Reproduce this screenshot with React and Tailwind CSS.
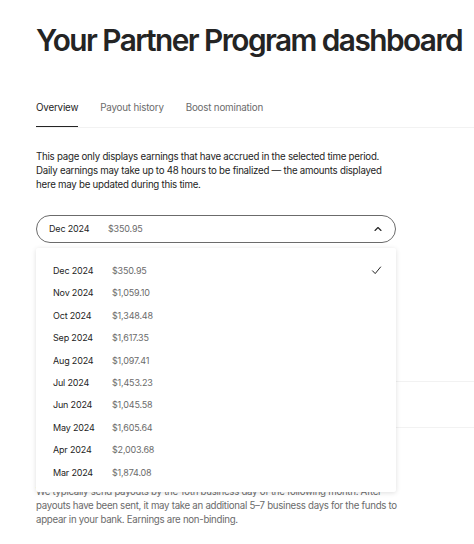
import { useState } from "react";

const months = [
  ["Dec 2024", "$350.95"],
  ["Nov 2024", "$1,059.10"],
  ["Oct 2024", "$1,348.48"],
  ["Sep 2024", "$1,617.35"],
  ["Aug 2024", "$1,097.41"],
  ["Jul 2024", "$1,453.23"],
  ["Jun 2024", "$1,045.58"],
  ["May 2024", "$1,605.64"],
  ["Apr 2024", "$2,003.68"],
  ["Mar 2024", "$1,874.08"],
];

function ChevronUp() {
  return (
    <svg width="10" height="10" viewBox="0 0 10 10" fill="none">
      <path d="M2 6.5L5 3.5L8 6.5" stroke="#242424" strokeWidth="1.1" strokeLinecap="round" strokeLinejoin="round" />
    </svg>
  );
}

function Check() {
  return (
    <svg width="11" height="11" viewBox="0 0 11 11" fill="none">
      <path d="M1.5 5.8L4.2 8.6L9.6 2" stroke="#242424" strokeWidth="1" strokeLinecap="round" strokeLinejoin="round" />
    </svg>
  );
}

function App() {
  const [selected, setSelected] = useState(0);
  const [tab, setTab] = useState("Overview");
  const tabs = ["Overview", "Payout history", "Boost nomination"];

  return (
    <div className="w-[474px] h-[544px] overflow-hidden bg-white text-[#242424] font-['Inter',sans-serif]">
      <div className="pl-[36px]">
        <h1 className="pt-[18px] text-[29.8px] leading-[44px] font-semibold tracking-[-0.052em] whitespace-nowrap">
          Your Partner Program dashboard
        </h1>

        <div className="mt-[38px] flex gap-[22px] border-b border-[#f2f2f2] text-[9.8px] tracking-[-0.02em]">
          {tabs.map((t) => (
            <button
              key={t}
              onClick={() => setTab(t)}
              className={`pb-[10px] pt-[1px] border-b ${
                tab === t ? "border-[#242424] text-[#242424]" : "border-transparent text-[#6b6b6b]"
              }`}
            >
              {t}
            </button>
          ))}
        </div>

        <p className="mt-[22px] w-[360px] text-[9.7px] leading-[14.3px] tracking-[-0.025em]">
          This page only displays earnings that have accrued in the selected time period. Daily earnings may take up to 48 hours to be finalized — the amounts displayed here may be updated during this time.
        </p>

        <div className="relative mt-[22px] w-[360px]">
          <button className="w-full h-[28px] flex items-center rounded-full border border-[#6b6b6b] pl-[12px] pr-[12px] text-[9px] tracking-[-0.02em]">
            <span className="w-[59px] text-left">{months[selected][0]}</span>
            <span className="text-[#6b6b6b]">{months[selected][1]}</span>
            <span className="ml-auto">
              <ChevronUp />
            </span>
          </button>

          <div className="absolute left-0 top-[33px] z-10 w-[360px] bg-white rounded-[2px] shadow-[0_1px_5px_rgba(0,0,0,0.13)] pt-[12px] pb-[9px]">
            {months.map(([m, v], i) => (
              <div
                key={m}
                onClick={() => setSelected(i)}
                className="h-[22.4px] flex items-center pl-[17px] pr-[14px] text-[9px] tracking-[-0.02em] cursor-pointer"
              >
                <span className="w-[59px]">{m}</span>
                <span className="text-[#6b6b6b]">{v}</span>
                {selected === i && (
                  <span className="ml-auto">
                    <Check />
                  </span>
                )}
              </div>
            ))}
          </div>
        </div>

        <div className="mt-[138px] border-t border-[#f2f2f2] h-[46px]" />
        <div className="border-t border-[#f2f2f2] pt-[57px]">
          <p className="whitespace-nowrap text-[9.7px] leading-[14px] tracking-[-0.03em] text-[#6b6b6b]">
            We typically send payouts by the 10th business day of the following month. After
            <br />
            payouts have been sent, it may take an additional 5–7 business days for the funds to
            <br />
            appear in your bank. Earnings are non-binding.
          </p>
        </div>
      </div>
    </div>
  );
}

export default App;
